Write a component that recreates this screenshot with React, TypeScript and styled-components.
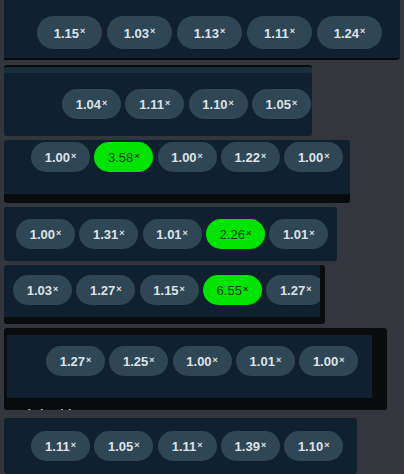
import React from "react";
import styled, { createGlobalStyle, css } from "styled-components";

const Global = createGlobalStyle`
  html, body { margin: 0; padding: 0; background: #34363e; }
  body { font-family: "Liberation Sans", Arial, sans-serif; overflow: hidden; }
`;

const Page = styled.div`
  display: flex;
  flex-direction: column;
  align-items: flex-start;
  padding-left: 4px;
  width: 400px;
  height: 474px;
  overflow: hidden;
`;

type PanelProps = {
  $w: number;
  $h: number;
  $pt: number;
  $pl: number;
  $mt: number;
  $variant?: "bottom2" | "topstrip" | "bottom9" | "rightbottom" | "plain";
};

const Panel = styled.div<PanelProps>`
  box-sizing: border-box;
  flex: none;
  width: ${(p) => p.$w}px;
  height: ${(p) => p.$h}px;
  margin-top: ${(p) => p.$mt}px;
  padding: ${(p) => p.$pt}px 0 0 ${(p) => p.$pl}px;
  background: #10202e;
  overflow: hidden;
  border-radius: 3px;
  ${(p) =>
    p.$variant === "bottom2" &&
    css`
      border-bottom: 2px solid #0a0b0d;
      border-radius: 0 0 4px 0;
    `}
  ${(p) =>
    p.$variant === "topstrip" &&
    css`
      border-top: 2px solid #0a0b0d;
      box-shadow: inset 0 6px 0 #1a2d3b;
    `}
  ${(p) =>
    p.$variant === "bottom9" &&
    css`
      border-bottom: 9px solid #0a0b0d;
    `}
  ${(p) =>
    p.$variant === "rightbottom" &&
    css`
      border-right: 5px solid #0a0b0d;
      border-bottom: 7px solid #0a0b0d;
    `}
`;

const Framed = styled.div<{ $mt: number }>`
  box-sizing: border-box;
  flex: none;
  width: 383px;
  height: 82px;
  margin-top: ${(p) => p.$mt}px;
  background: #0a0b0d;
  border-radius: 3px;
  padding: 7px 15px 0 3px;
  overflow: hidden;
  display: flex;
  flex-direction: column;
`;

const Inner = styled.div`
  box-sizing: border-box;
  height: 63px;
  flex: none;
  background: #11202e;
  padding: 11px 0 0 39px;
`;

const Caption = styled.div`
  flex: none;
  margin-top: 9px;
  padding-left: 4px;
  font-size: 14px;
  font-weight: 700;
  color: #aeb3ba;
  white-space: nowrap;
`;

const Row = styled.div<{ $gap: number }>`
  display: flex;
  gap: ${(p) => p.$gap}px;
  flex-wrap: nowrap;
`;

const Pill = styled.div<{ $w: number; $h: number; $hot?: boolean }>`
  flex: none;
  box-sizing: border-box;
  width: ${(p) => p.$w}px;
  height: ${(p) => p.$h}px;
  border-radius: ${(p) => p.$h / 2}px;
  background: ${(p) => (p.$hot ? "#00e400" : "#2f4655")};
  color: ${(p) => (p.$hot ? "#0c3d10" : "#dee3e7")};
  font-size: 13px;
  font-weight: ${(p) => (p.$hot ? 400 : 700)};
  display: flex;
  align-items: center;
  justify-content: center;
  padding-top: 1px;
  white-space: nowrap;
`;

const Times = styled.span`
  font-size: 9px;
  font-weight: 700;
  position: relative;
  top: -2px;
  margin-left: 1px;
`;

type RowData = { values: string[]; hot?: number };

const Pills = ({ data, w, h, gap }: { data: RowData; w: number; h: number; gap: number }) => (
  <Row $gap={gap}>
    {data.values.map((v, i) => (
      <Pill key={i} $w={w} $h={h} $hot={data.hot === i}>
        {v}
        <Times>×</Times>
      </Pill>
    ))}
  </Row>
);

export default function App() {
  return (
    <>
      <Global />
      <Page>
        <Panel $w={396} $h={60} $pt={16} $pl={33} $mt={0} $variant="bottom2">
          <Pills data={{ values: ["1.15", "1.03", "1.13", "1.11", "1.24"] }} w={65} h={33} gap={5} />
        </Panel>
        <Panel $w={308} $h={71} $pt={22} $pl={58} $mt={5} $variant="topstrip">
          <Pills data={{ values: ["1.04", "1.11", "1.10", "1.05"] }} w={59} h={30} gap={4.3} />
        </Panel>
        <Panel $w={346} $h={63} $pt={2} $pl={27} $mt={4} $variant="bottom9">
          <Pills data={{ values: ["1.00", "3.58", "1.00", "1.22", "1.00"], hot: 1 }} w={59} h={30} gap={4.3} />
        </Panel>
        <Panel $w={333} $h={54} $pt={12} $pl={12} $mt={4} $variant="plain">
          <Pills data={{ values: ["1.00", "1.31", "1.01", "2.26", "1.01"], hot: 3 }} w={59} h={30} gap={4.3} />
        </Panel>
        <Panel $w={321} $h={59} $pt={10} $pl={9} $mt={4} $variant="rightbottom">
          <Pills data={{ values: ["1.03", "1.27", "1.15", "6.55", "1.27"], hot: 3 }} w={59} h={30} gap={4.3} />
        </Panel>
        <Framed $mt={4}>
          <Inner>
            <Pills data={{ values: ["1.27", "1.25", "1.00", "1.01", "1.00"] }} w={59} h={30} gap={4.3} />
          </Inner>
          <Caption>Original bets</Caption>
        </Framed>
        <Panel $w={353} $h={56} $pt={13} $pl={27} $mt={8} $variant="plain">
          <Pills data={{ values: ["1.11", "1.05", "1.11", "1.39", "1.10"] }} w={59} h={30} gap={4.3} />
        </Panel>
      </Page>
    </>
  );
}
